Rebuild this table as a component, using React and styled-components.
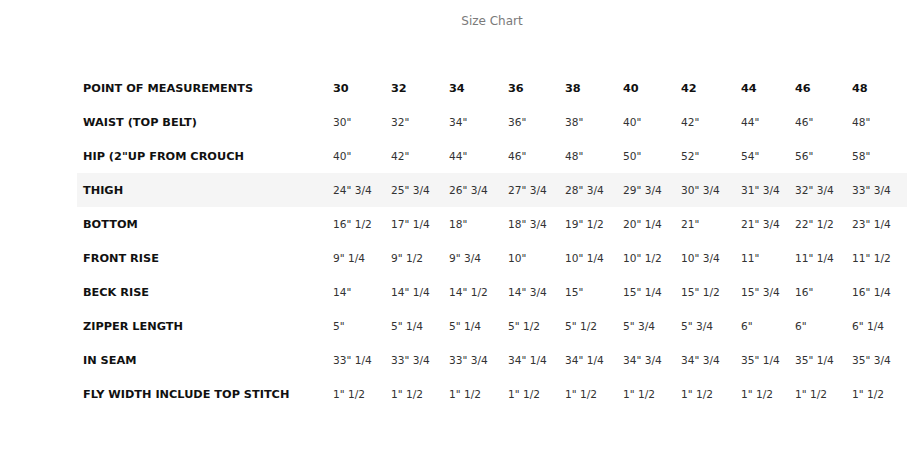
import React from 'react';
import styled, { createGlobalStyle } from 'styled-components';

const GlobalStyle = createGlobalStyle`
  body {
    margin: 0;
    background: #ffffff;
    font-family: "DejaVu Sans", "Noto Sans", sans-serif;
  }
`;

const Page = styled.div`
  padding: 13px 4px 0 77px;
  width: 911px;
  box-sizing: border-box;
`;

const Caption = styled.div`
  text-align: center;
  font-size: 12px;
  color: #7a7a7a;
  height: 58px;
  line-height: 16px;
`;

const Row = styled.div`
  display: grid;
  grid-template-columns: 250px 58px 58px 59px 57px 58px 58px 60px 54px 57px 1fr;
  height: 34px;
  align-items: center;
  background: ${(p) => (p.$shaded ? '#f5f5f5' : 'transparent')};
`;

const Label = styled.div`
  padding-left: 6px;
  font-size: 11.3px;
  font-weight: bold;
  color: #111;
  white-space: nowrap;
`;

const Cell = styled.div`
  padding-left: 6px;
  font-size: ${(p) => (p.$head ? '11.3px' : '10.6px')};
  font-weight: ${(p) => (p.$head ? 'bold' : 'normal')};
  color: ${(p) => (p.$head ? '#111' : '#333')};
  white-space: nowrap;
`;

const sizes = ['30', '32', '34', '36', '38', '40', '42', '44', '46', '48'];

const rows = [
  ['WAIST (TOP BELT)', ['30"', '32"', '34"', '36"', '38"', '40"', '42"', '44"', '46"', '48"']],
  ['HIP (2"UP FROM CROUCH', ['40"', '42"', '44"', '46"', '48"', '50"', '52"', '54"', '56"', '58"']],
  ['THIGH', ['24" 3/4', '25" 3/4', '26" 3/4', '27" 3/4', '28" 3/4', '29" 3/4', '30" 3/4', '31" 3/4', '32" 3/4', '33" 3/4'], true],
  ['BOTTOM', ['16" 1/2', '17" 1/4', '18"', '18" 3/4', '19" 1/2', '20" 1/4', '21"', '21" 3/4', '22" 1/2', '23" 1/4']],
  ['FRONT RISE', ['9" 1/4', '9" 1/2', '9" 3/4', '10"', '10" 1/4', '10" 1/2', '10" 3/4', '11"', '11" 1/4', '11" 1/2']],
  ['BECK RISE', ['14"', '14" 1/4', '14" 1/2', '14" 3/4', '15"', '15" 1/4', '15" 1/2', '15" 3/4', '16"', '16" 1/4']],
  ['ZIPPER LENGTH', ['5"', '5" 1/4', '5" 1/4', '5" 1/2', '5" 1/2', '5" 3/4', '5" 3/4', '6"', '6"', '6" 1/4']],
  ['IN SEAM', ['33" 1/4', '33" 3/4', '33" 3/4', '34" 1/4', '34" 1/4', '34" 3/4', '34" 3/4', '35" 1/4', '35" 1/4', '35" 3/4']],
  ['FLY WIDTH INCLUDE TOP STITCH', ['1" 1/2', '1" 1/2', '1" 1/2', '1" 1/2', '1" 1/2', '1" 1/2', '1" 1/2', '1" 1/2', '1" 1/2', '1" 1/2']],
];

const App = () => (
  <Page>
    <GlobalStyle />
    <Caption>Size Chart</Caption>
    <Row>
      <Label>POINT OF MEASUREMENTS</Label>
      {sizes.map((s) => (
        <Cell key={s} $head>{s}</Cell>
      ))}
    </Row>
    {rows.map(([name, values, shaded]) => (
      <Row key={name} $shaded={shaded}>
        <Label>{name}</Label>
        {values.map((v, i) => (
          <Cell key={i}>{v}</Cell>
        ))}
      </Row>
    ))}
  </Page>
);

export default App;
